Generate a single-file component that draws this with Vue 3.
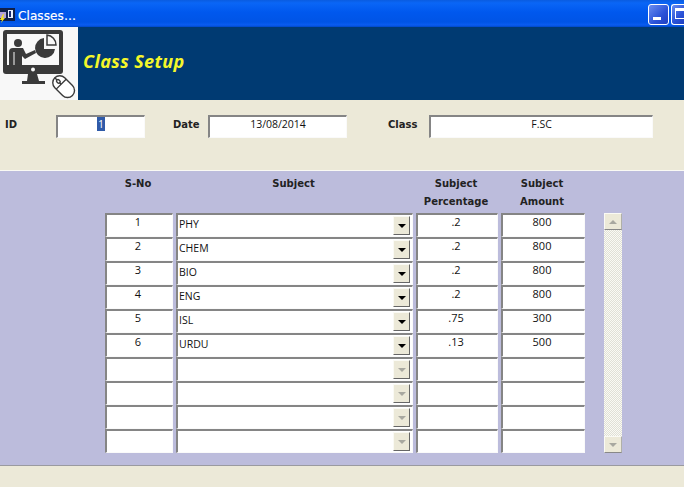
<script setup>
const rows = [
  { n: '1', s: 'PHY', p: '.2', a: '800' },
  { n: '2', s: 'CHEM', p: '.2', a: '800' },
  { n: '3', s: 'BIO', p: '.2', a: '800' },
  { n: '4', s: 'ENG', p: '.2', a: '800' },
  { n: '5', s: 'ISL', p: '.75', a: '300' },
  { n: '6', s: 'URDU', p: '.13', a: '500' },
  { n: '', s: '', p: '', a: '' },
  { n: '', s: '', p: '', a: '' },
  { n: '', s: '', p: '', a: '' },
  { n: '', s: '', p: '', a: '' }
]
</script>

<template>
  <div class="win">
    <div class="title">
      <svg class="appicon" width="15" height="16" viewBox="0 0 15 16">
        <rect x="0" y="1" width="15" height="13" fill="#10204a" />
        <rect x="8" y="3" width="5" height="8" fill="#e8f0ff" />
        <path d="M9 4h2v6h-2z" fill="#1c2c70" />
        <path d="M0 5h6v6H0z" fill="#b0a0d8" />
        <path d="M3 7L0 13h2l-1 3 4-5H3l1-4z" fill="#f4e020" />
      </svg>
      <span class="title-text">Classes…</span>
      <span class="grow"></span>
      <span class="wbtn"><i class="min"></i></span>
      <span class="wbtn cut"><i class="max"></i></span>
    </div>

    <div class="banner">
      <div class="logo">
        <svg width="78" height="73" viewBox="0 0 78 73">
          <rect x="3" y="3" width="60" height="44" rx="3" fill="#3a3a3a" />
          <rect x="7" y="7" width="52" height="31" fill="#f8f8f8" />
          <circle cx="33" cy="42.5" r="2" fill="#f8f8f8" />
          <path d="M28 47h9l2 7h6v3H22v-3h5z" fill="#3a3a3a" />
          <circle cx="18" cy="16" r="4" fill="#3a3a3a" />
          <path d="M9 38V25q0-4 4-4h10l3 6 9-4 1 3-11 6-3-3v10z" fill="#3a3a3a" />
          <path d="M14 25v13" stroke="#f8f8f8" stroke-width="1" />
          <path d="M44 11a10 10 0 1 0 11 11H44z" fill="#3a3a3a" />
          <path d="M47 8a10 10 0 0 1 9 10h-9z" fill="#f8f8f8" stroke="#3a3a3a" stroke-width="1.5" />
          <g transform="rotate(-45 64 60)" fill="#fff" stroke="#3a3a3a" stroke-width="1.4">
            <rect x="57" y="47" width="14" height="25" rx="7" />
            <path d="M57 56h14M64 47v9" />
            <rect x="62.5" y="50" width="3" height="4" rx="1.5" />
          </g>
        </svg>
      </div>
      <span class="heading">Class Setup</span>
    </div>

    <div class="form">
      <span class="lbl lbl-id">ID</span>
      <span class="field f-id"><span class="sel">1</span></span>
      <span class="lbl lbl-date">Date</span>
      <span class="field f-date">13/08/2014</span>
      <span class="lbl lbl-class">Class</span>
      <span class="field f-class">F.SC</span>
    </div>

    <div class="panel">
      <div class="heads">
        <span>S-No</span>
        <span>Subject</span>
        <span>Subject<br />Percentage</span>
        <span>Subject<br />Amount</span>
      </div>
      <div class="body">
        <div class="grid">
          <div v-for="(r, i) in rows" :key="i" class="row">
            <span class="cell">{{ r.n }}</span>
            <span class="cell combo">
              <span class="combo-text">{{ r.s }}</span>
              <span class="arrow" :class="{ off: !r.s }"><i></i></span>
            </span>
            <span class="cell">{{ r.p }}</span>
            <span class="cell">{{ r.a }}</span>
          </div>
        </div>
        <div class="scroll">
          <span class="sbtn"><i class="up"></i></span>
          <span class="track"></span>
          <span class="sbtn"><i class="down"></i></span>
        </div>
      </div>
    </div>

    <div class="status"></div>
  </div>
</template>

<style>
html, body { margin: 0; background: #fff; }
</style>

<style scoped>
.win {
  width: 684px;
  height: 487px;
  display: flex;
  flex-direction: column;
  overflow: hidden;
  font-family: "Open Sans", "Liberation Sans", sans-serif;
  color: #111;
}
.title {
  height: 27px;
  flex: none;
  display: flex;
  align-items: center;
  background: linear-gradient(180deg, #0a5ce0 0, #0a66f6 3px, #0058ee 12px, #0054e6 22px, #0a5cf0 25px, #0048c8 27px);
  box-sizing: border-box;
  padding-top: 4px;
}
.appicon { flex: none; margin-top: -1px; }
.title-text {
  margin-left: 3px;
  color: #fff;
  font: 12px "DejaVu Sans", sans-serif;
  letter-spacing: .1px;
  -webkit-text-stroke: .2px #fff;
}
.grow { flex: 1; }
.wbtn {
  width: 21px;
  height: 21px;
  margin-left: 2px;
  margin-bottom: 2px;
  flex: none;
  box-sizing: border-box;
  border: 1px solid #fff;
  border-radius: 3px;
  background: linear-gradient(135deg, #6a8df0, #2a52d8 60%, #2040c0);
  position: relative;
}
.wbtn.cut { width: 13px; border-right: 0; border-radius: 3px 0 0 3px; }
.min { position: absolute; left: 4px; bottom: 4px; width: 8px; height: 3px; background: #fff; }
.max { position: absolute; left: 3px; top: 3px; width: 14px; height: 11px; box-sizing: border-box; border: 1px solid #fff; border-top-width: 3px; }
.banner {
  height: 73px;
  flex: none;
  display: flex;
  align-items: center;
  background: #003a72;
}
.logo { width: 78px; height: 73px; background: #f8f8f8; flex: none; }
.logo svg { display: block; }
.heading {
  margin-left: 5px;
  margin-top: -5px;
  color: #f4f62a;
  font: italic bold 18px "Open Sans", sans-serif;
  letter-spacing: .4px;
}
.form {
  height: 70px;
  flex: none;
  box-sizing: border-box;
  padding: 15px 0 0 5px;
  display: flex;
  align-items: flex-start;
  background: #ece9d8;
}
.lbl {
  font: bold 10px/20px "DejaVu Sans", sans-serif;
  color: #222;
}
.lbl-id { width: 51px; }
.lbl-date { margin-left: 28px; width: 35px; }
.lbl-class { margin-left: 41px; width: 41px; }
.field {
  height: 23px;
  box-sizing: border-box;
  background: #fff;
  border-style: solid;
  border-width: 2px 1px 1px 2px;
  border-color: #858585 #fafafa #fafafa #858585;
  font-size: 10.5px;
  line-height: 14px;
  text-align: center;
}
.f-id { width: 89px; }
.f-date { width: 139px; }
.f-class { width: 224px; }
.sel { background: #2f5aa8; color: #fff; padding: 0 1px; }
.panel {
  height: 296px;
  flex: none;
  box-sizing: border-box;
  border-top: 1px solid #fafaf4;
  border-bottom: 1px solid #9a9aa0;
  padding-top: 4px;
  background: #bcbcdc;
}
.heads {
  display: grid;
  grid-template-columns: 68px 237px 82px 84px;
  column-gap: 3px;
  margin-left: 104px;
  height: 38px;
  font: bold 10px/18px "DejaVu Sans", sans-serif;
  color: #222;
  text-align: center;
}
.body { display: flex; margin-left: 105px; }
.grid { display: flex; flex-direction: column; }
.row {
  display: grid;
  grid-template-columns: 68px 237px 82px 84px;
  column-gap: 3px;
  height: 24px;
}
.cell {
  box-sizing: border-box;
  height: 24px;
  background: #fff;
  border-style: solid;
  border-width: 2px 1px 1px 2px;
  border-color: #858585 #fafafa #fafafa #858585;
  font-size: 11px;
  line-height: 13px;
  text-align: center;
  padding-right: 3px;
}
.combo { display: flex; text-align: left; padding-right: 0; font-size: 10.5px; }
.combo-text { flex: 1; padding-left: 1px; line-height: 19px; }
.arrow, .sbtn {
  flex: none;
  width: 17px;
  height: 19px;
  box-sizing: border-box;
  background: #ece9d8;
  border-style: solid;
  border-width: 1px;
  border-color: #fafaf4 #666 #666 #fafaf4;
  display: flex;
  align-items: center;
  justify-content: center;
  margin: 1px 2px 0 0;
}
.arrow i {
  width: 0;
  height: 0;
  border: 4px solid transparent;
  border-top-color: #000;
  border-bottom-width: 0;
}
.arrow.off i { border-top-color: #a8a8a0; }
.scroll {
  width: 18px;
  margin-left: 19px;
  height: 240px;
  display: flex;
  flex-direction: column;
}
.sbtn { width: 18px; height: 17px; margin: 0; border-color: #fafaf4 #b0b0a8 #888 #fafaf4; }
.track {
  flex: 1;
  background-color: #f4f3ea;
  background-image: repeating-conic-gradient(#e0e0d6 0 25%, #fafaf4 0 50%);
  background-size: 2px 2px;
}
.up, .down { width: 0; height: 0; border: 4px solid transparent; }
.up { border-bottom-color: #a8a8a0; border-top-width: 0; }
.down { border-top-color: #a8a8a0; border-bottom-width: 0; }
.status { flex: 1; background: #ece9d8; }
</style>
